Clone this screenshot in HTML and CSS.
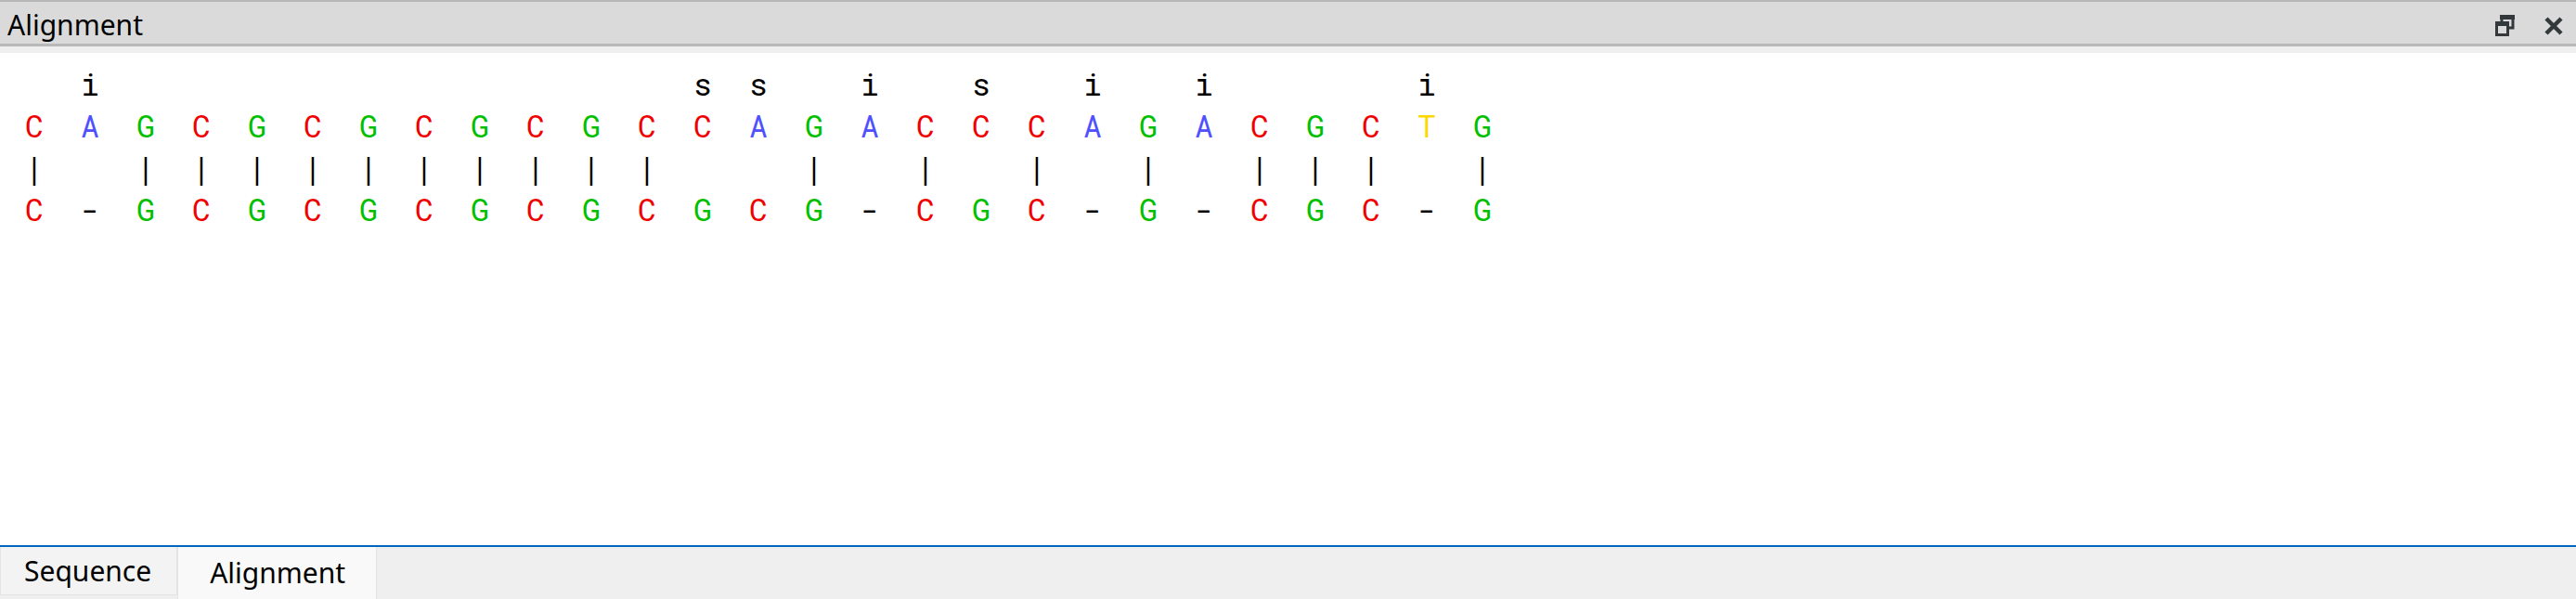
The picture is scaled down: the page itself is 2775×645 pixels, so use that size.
FILE: index.html
```
<!DOCTYPE html>
<html lang="en">
<head>
    <meta charset="UTF-8">
    <meta name="viewport" content="width=device-width, initial-scale=1.0">
    <title>Alignment</title>
    <link rel="stylesheet" href="styles.css">
</head>
<body>

<header class="title-bar">
    <h1>Alignment</h1>
    <div class="window-buttons">
        <button type="button" class="icon-button" aria-label="Float">
            <svg width="21" height="24" viewBox="0 0 21 24">
                <path d="M7 7V3H19V14H15" fill="none" stroke="#33383b" stroke-width="3"/>
                <path d="M5 0H21V5H5Z" fill="#33383b"/>
                <rect x="1.5" y="9" width="12" height="12.5" fill="#dadada" stroke="#33383b" stroke-width="3"/>
                <path d="M0 7H15V12H0Z" fill="#33383b"/>
            </svg>
        </button>
        <button type="button" class="icon-button" aria-label="Close">
            <svg width="20" height="20" viewBox="0 0 20 20">
                <path d="M2 2L18 18M18 2L2 18" stroke="#33383b" stroke-width="4.5"/>
            </svg>
        </button>
    </div>
</header>

<main class="alignment-area">
    <table class="alignment" aria-label="Sequence alignment">
        <tbody id="alignmentBody"></tbody>
    </table>
</main>

<nav class="tabs">
    <button type="button" class="tab">Sequence</button>
    <button type="button" class="tab active">Alignment</button>
</nav>

<script>
    const reference = 'CAGCGCGCGCGCCAGACCCAGACGCTG';
    const query = 'C-GCGCGCGCGCGCG-CGC-G-CGC-G';

    // i = indel, s = substitution
    const marks = [...reference].map((base, i) => {
        if (query[i] === '-') return 'i';
        return base === query[i] ? '' : 's';
    });
    const bars = [...reference].map((base, i) => base === query[i] ? '|' : '');

    function addRow(cells) {
        const row = document.getElementById('alignmentBody').insertRow();
        cells.forEach(text => {
            const cell = row.insertCell();
            cell.textContent = text;
            if ('ACGT'.includes(text) && text !== '') {
                cell.className = `base-${text.toLowerCase()}`;
            }
        });
    }

    [marks, [...reference], bars, [...query]].forEach(addRow);
</script>
</body>
</html>
```
FILE: styles.css
```
body {
    display: flex;
    flex-direction: column;
    min-height: 100vh;
    margin: 0;
    background-color: #efefef;
    color: #000;
    font-family: "Segoe UI", "Noto Sans", sans-serif;
    font-size: 30px;
}

.title-bar {
    display: flex;
    justify-content: space-between;
    align-items: center;
    height: 45px;
    padding: 0 14px 0 8px;
    border-top: 2px solid #b8b8b8;
    border-bottom: 3px solid #b8b8b8;
    background-color: #dadada;
}

h1 {
    margin: 0;
    padding-top: 4px;
    font-size: 30px;
    font-weight: normal;
    line-height: 41px;
}

.window-buttons {
    display: flex;
    align-items: center;
    gap: 32px;
    padding-top: 6px;
}

.icon-button {
    display: flex;
    padding: 0;
    border: none;
    background: none;
    cursor: pointer;
}

.alignment-area {
    flex: 1;
    margin-top: 7px;
    padding: 11px 7px;
    border-bottom: 2px solid #0067c0;
    background-color: #fff;
}

.alignment {
    border-collapse: collapse;
    table-layout: fixed;
    width: 1620px;
    font-family: "Roboto Mono", "DejaVu Sans Mono", monospace;
    font-size: 33px;
    line-height: 45px;
    text-align: center;
}

.alignment td {
    height: 45px;
    padding: 0;
}

.base-a {
    color: #5050ff;
}

.base-c {
    color: #f00000;
}

.base-g {
    color: #00c000;
}

.base-t {
    color: #ffd700;
}

.tabs {
    display: flex;
    align-items: flex-start;
    height: 56px;
}

.tab {
    height: 52px;
    padding: 0 27px 0 25px;
    border: 1px solid #e4e4e4;
    border-top: none;
    background-color: #f3f3f3;
    color: #000;
    font-family: inherit;
    font-size: 30px;
    line-height: 48px;
    cursor: pointer;
}

.tab.active {
    height: 56px;
    padding: 0 33px 0 34px;
    border-bottom: none;
    background-color: #f9f9f9;
    line-height: 56px;
}
```
